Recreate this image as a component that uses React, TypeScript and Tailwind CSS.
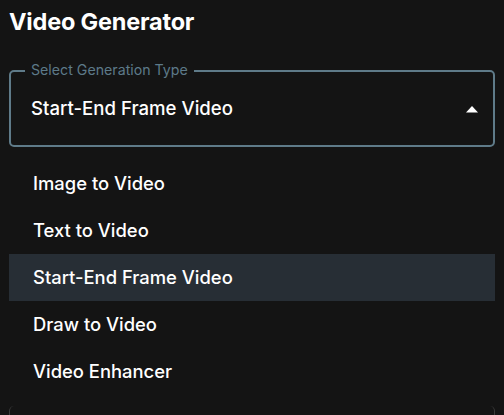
const options = [
  "Image to Video",
  "Text to Video",
  "Start-End Frame Video",
  "Draw to Video",
  "Video Enhancer",
];

export default function App() {
  const selected = "Start-End Frame Video";

  return (
    <div className="h-[415px] w-[504px] overflow-hidden bg-[#141414] px-[9px] pt-[6px] font-['Inter',sans-serif] text-white">
      <h1 className="text-[23.5px] font-bold leading-[32px] tracking-[-0.2px]">Video Generator</h1>

      {/* select field with notched label */}
      <div className="relative mt-[32px] flex h-[77px] items-center rounded-[5px] border-2 border-[#5f7b89] pl-[20px] pr-[14px]">
        <span className="absolute -top-[12px] left-[14px] bg-[#141414] px-[6px] text-[14.2px] leading-[20px] text-[#5d7a89]">
          Select Generation Type
        </span>
        <span className="flex-1 text-[18.6px] font-medium">{selected}</span>
        <svg width="14" height="8" viewBox="0 0 14 8">
          <path d="M1 7.5 L7 1 L13 7.5 Z" fill="#fff" />
        </svg>
      </div>

      {/* open menu */}
      <ul className="mt-[13px]">
        {options.map((o) => (
          <li
            key={o}
            className={
              o === selected
                ? "flex h-[47px] items-center bg-[#272e35] pl-[24px] text-[18.4px] font-medium"
                : "flex h-[47px] items-center pl-[24px] text-[18.4px] font-medium"
            }
          >
            {o}
          </li>
        ))}
      </ul>

      <div className="mt-[11px] h-[40px] rounded-t-[5px] border-x border-[#3a3a3a]" />
    </div>
  );
}
